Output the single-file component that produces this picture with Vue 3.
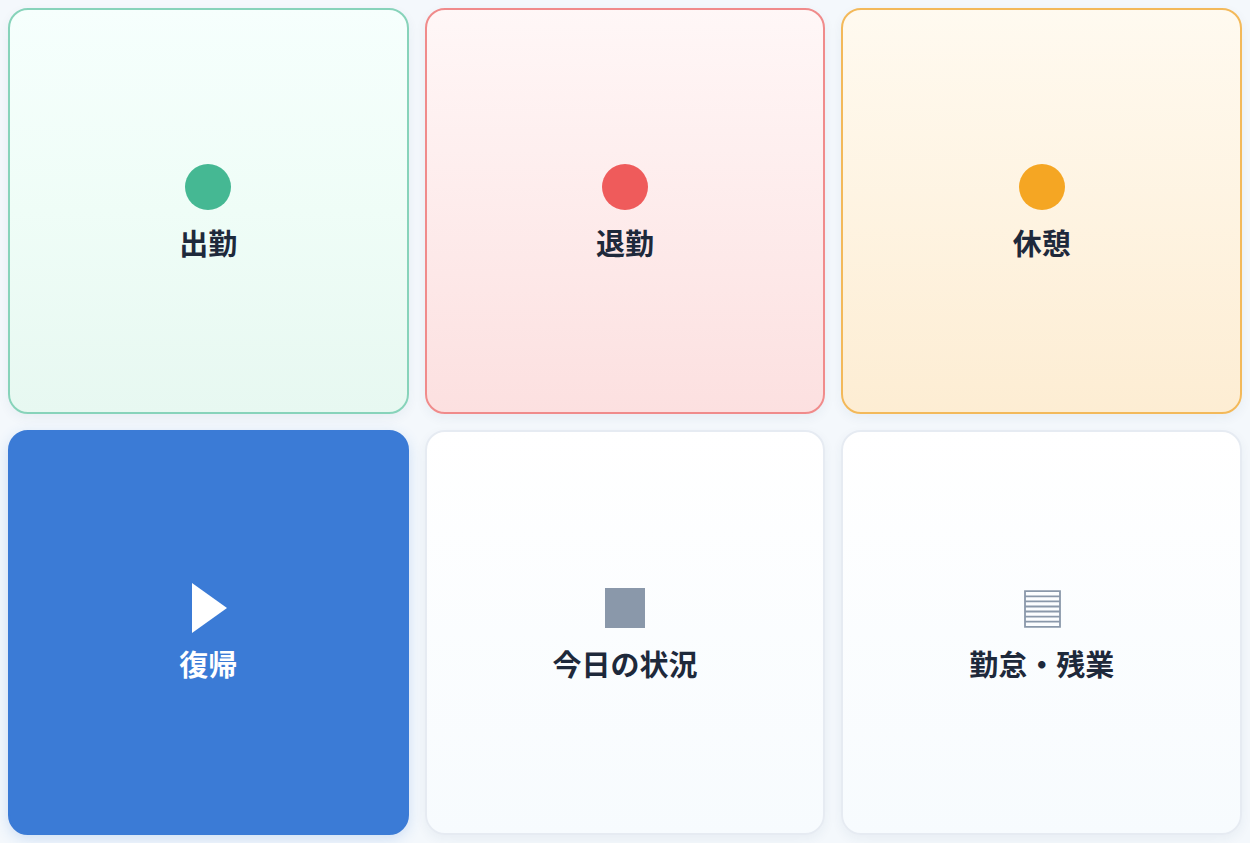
<template>
    <main class="punch-grid">
        <button
            v-for="item in actions"
            :key="item.label"
            type="button"
            class="punch-card"
            :class="item.tone"
        >
            <svg class="icon" viewBox="0 0 58 58" aria-hidden="true">
                <circle v-if="item.icon === 'circle'" cx="29" cy="29" r="23" fill="currentColor" />
                <path v-else-if="item.icon === 'play'" d="M13 4L48 29L13 54Z" fill="currentColor" />
                <path v-else-if="item.icon === 'square'" d="M9 9H49V49H9Z" fill="currentColor" />
                <path
                    v-else
                    d="M12 12.2H47V47.8H12ZM12 17.3H47M12 22.4H47M12 27.5H47M12 32.5H47M12 37.6H47M12 42.7H47"
                    fill="none"
                    stroke="currentColor"
                    stroke-width="1.8"
                />
            </svg>
            <span class="label">{{ item.label }}</span>
        </button>
    </main>
</template>

<script setup>
    const actions = [
        { label: '出勤', icon: 'circle', tone: 'clock-in' },
        { label: '退勤', icon: 'circle', tone: 'clock-out' },
        { label: '休憩', icon: 'circle', tone: 'rest' },
        { label: '復帰', icon: 'play', tone: 'resume' },
        { label: '今日の状況', icon: 'square', tone: 'plain' },
        { label: '勤怠・残業', icon: 'list', tone: 'plain' }
    ];
</script>

<style>
    body {
        margin: 0;
        background: #f4f8fc;
    }
</style>

<style scoped>
    .punch-grid {
        box-sizing: border-box;
        min-height: 100vh;
        padding: 8px;
        display: grid;
        grid-template-columns: repeat(3, minmax(0, 1fr));
        grid-auto-rows: 1fr;
        gap: 16px;
        font-family: 'Noto Sans CJK JP', sans-serif;
    }

    .punch-card {
        display: flex;
        flex-direction: column;
        align-items: center;
        justify-content: center;
        gap: 4px;
        padding: 16px;
        border: 2px solid #e6ebf2;
        border-radius: 20px;
        background: linear-gradient(180deg, #ffffff 0%, #f7fbfe 100%) border-box;
        box-shadow: 0 4px 12px rgba(30, 60, 100, 0.06);
        color: #1e293b;
        font-family: inherit;
        cursor: pointer;
    }

    .icon {
        width: 58px;
        height: 58px;
        color: #8a98aa;
    }

    .label {
        font-size: 29px;
        font-weight: 700;
        line-height: 44px;
    }

    .clock-in {
        border-color: #87d3ba;
        background: linear-gradient(180deg, #f6fffd 0%, #effdf7 50%, #e7f8f1 100%) border-box;
    }

    .clock-in .icon {
        color: #45b893;
    }

    .clock-out {
        border-color: #f08b8b;
        background: linear-gradient(180deg, #fff7f7 0%, #fce0e0 100%) border-box;
    }

    .clock-out .icon {
        color: #ef5b5b;
    }

    .rest {
        border-color: #f3b95a;
        background: linear-gradient(180deg, #fffaf0 0%, #fdedd3 100%) border-box;
    }

    .rest .icon {
        color: #f5a623;
    }

    .resume {
        border-color: #3b7bd6;
        background: #3b7bd6;
        box-shadow: 0 4px 14px rgba(59, 123, 214, 0.2);
        color: #ffffff;
    }

    .resume .icon {
        color: #ffffff;
    }
</style>
